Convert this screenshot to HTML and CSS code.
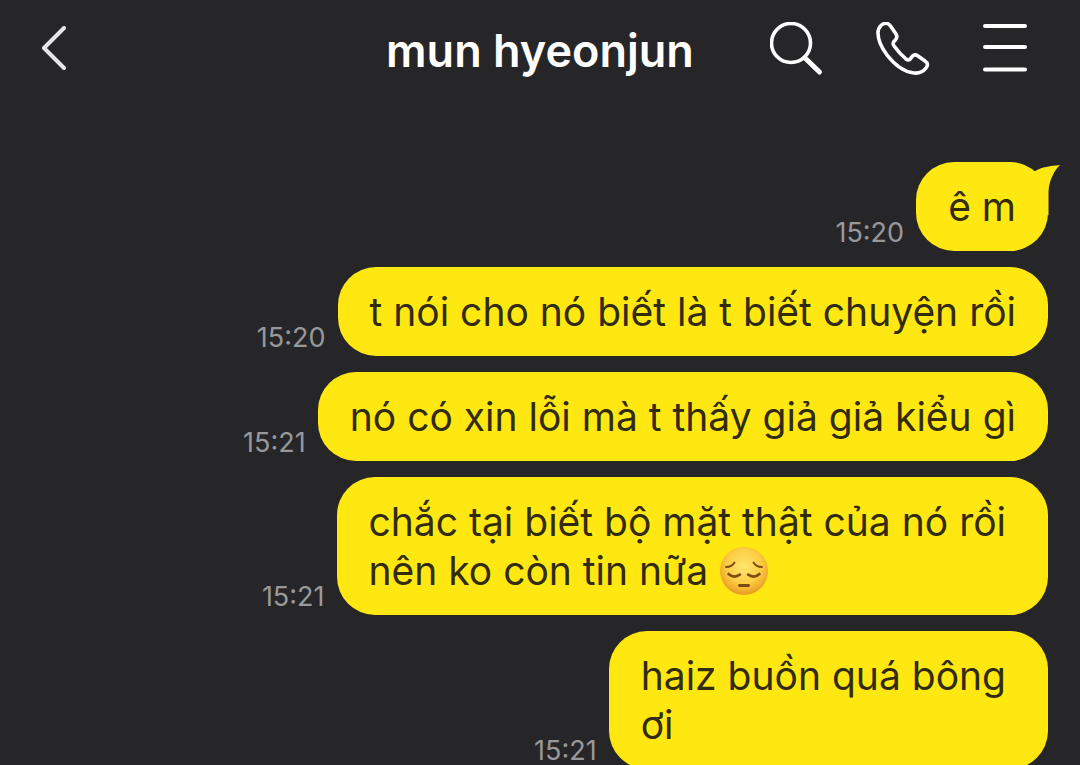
FILE: index.html
```html
<!DOCTYPE html>
<html lang="vi">
<head>
  <meta charset="UTF-8">
  <title>mun hyeonjun</title>
  <meta name="viewport" content="width=device-width, initial-scale=1.0">
  <link rel="stylesheet" href="styles.css">
</head>
<body>

<header class="topbar">
  <button class="icon-btn" type="button" aria-label="Back">
    <svg width="28" height="46" viewBox="0 0 28 46" fill="none" stroke="#e6e6e7" stroke-width="4" stroke-linecap="round" stroke-linejoin="round">
      <path d="M22 2 L2 22 L22 42"/>
    </svg>
  </button>

  <h1 class="title">mun hyeonjun</h1>

  <div class="actions">
    <button class="icon-btn" type="button" aria-label="Search">
      <svg width="54" height="54" viewBox="0 0 54 54" fill="none" stroke="#fff" stroke-linecap="round">
        <circle cx="21" cy="21" r="19.500" stroke-width="3.600"/>
        <path d="M35 36 L49.500 50" stroke-width="5"/>
      </svg>
    </button>
    <button class="icon-btn" type="button" aria-label="Call">
      <svg width="54" height="54" viewBox="0 0 54 54" fill="none" stroke="#fff" stroke-width="3.600" stroke-linejoin="round">
        <path d="M5 3.500 C8 0.500 12 0.500 14.500 4 L20 12 C21.500 14.500 21 16.500 19 18.500 C16.500 20.500 16.500 22 18.500 24.500 C22 29.500 26 33.500 30 37 C32 38.500 33.500 38.500 35 36 C37 32.500 39 32 42 34 L49 39 C52 41 52 43.500 50 46 C47 50 43 51.500 38 51 C28 50 18 42 11 33 C5 25 2 17 2 11 C2 8 3 5.500 5 3.500 Z"/>
      </svg>
    </button>
    <button class="icon-btn" type="button" aria-label="Menu">
      <svg width="46" height="54" viewBox="0 0 46 54" fill="none" stroke="#fff" stroke-width="4" stroke-linecap="round">
        <path d="M3 4 H43 M3 25 H43 M3 47.500 H43"/>
      </svg>
    </button>
  </div>
</header>

<main class="chat">
  <div class="message">
    <time class="time">15:20</time>
    <p class="bubble">ê m
      <svg class="tail" width="30" height="60" viewBox="0 0 30 60" fill="#ffe812">
        <path d="M0 12 L5 9 C12 5 20 4 30 3 C22 11 19 21 18.500 30 V53 L8 56 L0 30 Z"/>
      </svg>
    </p>
  </div>
  <div class="message">
    <time class="time">15:20</time>
    <p class="bubble">t nói cho nó biết là t biết chuyện rồi</p>
  </div>
  <div class="message">
    <time class="time">15:21</time>
    <p class="bubble">nó có xin lỗi mà t thấy giả giả kiểu gì</p>
  </div>
  <div class="message">
    <time class="time">15:21</time>
    <p class="bubble multiline">chắc tại biết bộ mặt thật của nó rồi<br>nên ko còn tin nữa
      <svg class="emoji" width="50" height="50" viewBox="0 0 50 50" role="img" aria-label="pensive face">
        <defs>
          <radialGradient id="face" cx="50%" cy="40%" r="60%">
            <stop offset="0" stop-color="#ffe56a"/>
            <stop offset="0.6" stop-color="#fccd45"/>
            <stop offset="1" stop-color="#e99a20"/>
          </radialGradient>
        </defs>
        <circle cx="25" cy="25" r="24" fill="url(#face)"/>
        <g fill="none" stroke="#7b4a12" stroke-linecap="round">
          <path d="M7 21 Q13 21 15.500 16.500 M43 21 Q37 21 34.500 16.500" stroke-width="1.800"/>
          <path d="M9.500 28 Q15 33 21 28.500 M29 28.500 Q35 33 40.500 28" stroke-width="2.600"/>
          <path d="M20.500 39.500 H29.500" stroke-width="2.800"/>
        </g>
      </svg>
    </p>
  </div>
  <div class="message">
    <time class="time">15:21</time>
    <p class="bubble multiline">haiz buồn quá bông<br>ơi</p>
  </div>
</main>

</body>
</html>
```
FILE: styles.css
```css
* {
  box-sizing: border-box;
}

body {
  height: 100vh;
  margin: 0;
  overflow: hidden;
  background: #262628;
  color: #fff;
  font-family: Inter, "Noto Sans", sans-serif;
}

.topbar {
  display: grid;
  grid-template-columns: 1fr auto 1fr;
  align-items: center;
  height: 98px;
  padding: 0 42px;
}

.title {
  margin: 0;
  padding-top: 4px;
  font-size: 45px;
  font-weight: 600;
  line-height: 56px;
}

.icon-btn {
  display: block;
  width: max-content;
  padding: 0;
  border: 0;
  background: none;
  cursor: pointer;
}

.icon-btn svg {
  display: block;
}

.actions {
  display: flex;
  justify-content: flex-end;
  gap: 52px;
  padding-right: 10px;
}

.chat {
  display: flex;
  flex-direction: column;
  gap: 16px;
  padding: 64px 32px 0;
}

.message {
  display: flex;
  justify-content: flex-end;
  align-items: flex-end;
  gap: 12px;
}

.time {
  padding-bottom: 2px;
  color: #98989b;
  font-size: 27px;
  line-height: 32px;
}

.bubble {
  position: relative;
  margin: 0;
  padding: 20px 32px;
  border-radius: 38px;
  background: #ffe812;
  color: #322c0c;
  font-size: 39px;
  line-height: 49px;
}

.bubble.multiline {
  padding-right: 42px;
}

.tail {
  position: absolute;
  top: 0;
  right: -12px;
}

.emoji {
  margin: -10px 0;
  vertical-align: -1px;
}
```
